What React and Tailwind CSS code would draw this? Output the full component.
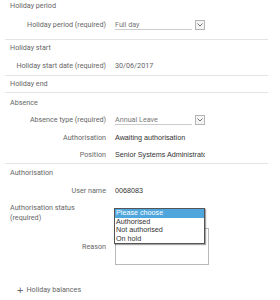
import React from 'react';

const label = "font-['Roboto',sans-serif] text-[7.2px] text-[#666]";
const value = "font-['Liberation_Sans',Arial,sans-serif] text-[7.2px] text-[#333]";

function Chevron() {
  return (
    <span className="w-[10px] h-[10px] border border-[#b5b5b5] bg-[#f4f4f4] flex items-center justify-center">
      <svg width="6" height="4" viewBox="0 0 6 4" fill="none">
        <path d="M0.5 0.5 L3 3 L5.5 0.5" stroke="#666" strokeWidth="0.9" />
      </svg>
    </span>
  );
}

function Row({ name, children, className = '', valueClass = '' }) {
  return (
    <div className={`flex items-center ${className}`}>
      <div className={`w-[101px] text-right leading-[10px] ${label}`}>{name}</div>
      <div className={`ml-[9px] flex-1 min-w-0 leading-[10px] text-[7.2px] ${valueClass}`}>{children}</div>
    </div>
  );
}

function SelectBox({ text }) {
  return (
    <div className="flex items-end w-[90px] h-[10px]">
      <div className={`flex-1 border-b border-[#ccc] h-[10px] leading-[9px] ${label} text-[#777]`}>{text}</div>
      <div className="ml-[3px]"><Chevron /></div>
    </div>
  );
}

export default function App() {
  return (
    <div className="w-[280px] h-[300px] bg-white overflow-hidden relative">
      <div className="mx-[5px] w-[263px]">
        {/* Holiday period */}
        <div className="border-b border-[#e3e3e3] pb-[6px]">
          <div className={`h-[12px] leading-[12px] pl-[5px] ${label}`}>Holiday period</div>
          <Row name="Holiday period (required)" className="mt-[5px] h-[16px]">
            <SelectBox text="Full day" />
          </Row>
        </div>

        {/* Holiday start */}
        <div className="border-b border-[#e3e3e3] pb-[3px]">
          <div className={`mt-[2px] h-[12px] leading-[12px] pl-[5px] ${label}`}>Holiday start</div>
          <Row name="Holiday start date (required)" className="mt-[6px] h-[12px]" valueClass={`${label} text-[#333]`}>
            30/06/2017
          </Row>
        </div>

        {/* Holiday end */}
        <div className="border-b border-[#e3e3e3] pb-[2px]">
          <div className={`mt-[2px] h-[12px] leading-[12px] pl-[5px] ${label}`}>Holiday end</div>
        </div>

        {/* Absence */}
        <div className="border-b border-[#e3e3e3]">
          <div className={`mt-[4px] h-[12px] leading-[12px] pl-[5px] ${label}`}>Absence</div>
          <Row name="Absence type (required)" className="mt-[2px] h-[18px]">
            <SelectBox text="Annual Leave" />
          </Row>
          <Row name="Authorisation" className="h-[18px]" valueClass={value}>
            Awaiting authorisation
          </Row>
          <Row name="Position" className="h-[16px]" valueClass={value}>
            <div className="w-[90px] overflow-hidden whitespace-nowrap">Senior Systems Administrator</div>
          </Row>
        </div>

        {/* Authorisation */}
        <div>
          <div className={`mt-[3px] h-[12px] leading-[12px] pl-[5px] ${label}`}>Authorisation</div>
          <Row name="User name" className="mt-[4px] h-[16px]" valueClass={value}>
            0068083
          </Row>
          <div className="flex mt-[4px]">
            <div className={`w-[101px] pl-[5px] leading-[10px] ${label}`}>
              Authorisation status<br />(required)
            </div>
            <div className="ml-[8px] relative mt-[5px] w-[91px] h-[12px]">
              <div className="absolute left-0 top-0 w-[91px] border border-[#555] bg-white shadow-[1px_1px_1px_rgba(0,0,0,0.35)] z-10">
                <div className={`${value} text-white bg-[#4ea6dc] leading-[8.6px] pl-[1px]`}>Please choose</div>
                <div className={`${value} text-[#222] leading-[8.6px] pl-[1px]`}>Authorised</div>
                <div className={`${value} text-[#222] leading-[8.6px] pl-[1px]`}>Not authorised</div>
                <div className={`${value} text-[#222] leading-[8.6px] pl-[1px]`}>On hold</div>
              </div>
            </div>
          </div>
          <Row name="Reason" className="mt-[5px]">
            <div className="w-[94px] h-[37px] border border-[#b8b8b8] bg-white" />
          </Row>
        </div>

        <div className={`mt-[20px] ml-[12px] flex items-center gap-[3px] ${label} text-[#333]`}>
          <span className="text-[11px] leading-[10px] font-['Liberation_Sans',sans-serif]">+</span>
          <span className="text-[7.2px]">Holiday balances</span>
        </div>
      </div>
    </div>
  );
}
